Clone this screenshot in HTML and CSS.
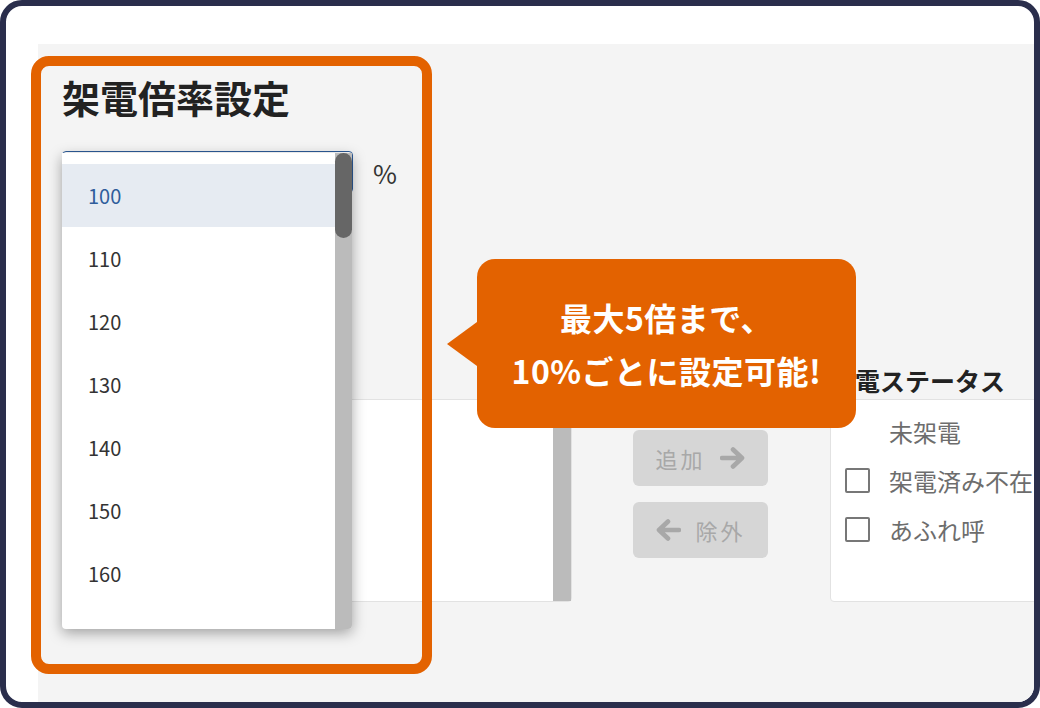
FILE: index.html
```html
<!DOCTYPE html>
<html lang="ja">
<head>
  <meta charset="UTF-8" />
  <title>架電倍率設定</title>
  <link rel="stylesheet" href="styles.css">
</head>
<body>

  <div class="frame">
    <div class="panel">

      <section class="rate">
        <h2 class="rate-title">架電倍率設定</h2>
        <div class="rate-row">
          <div class="select"></div>
          <span class="unit">%</span>
        </div>
      </section>

      <section class="transfer">
        <div class="col col-left">
          <div class="col-label"></div>
          <div class="listbox listbox-left">
            <div class="track"></div>
          </div>
        </div>

        <div class="col col-buttons">
          <button class="move-btn">
            <span class="move-text">追加</span>
            <svg class="arrow" viewBox="0 0 26 22" width="26" height="22">
              <path d="M2 11 H22 M13 2.5 L22 11 L13 19.5" fill="none" stroke="currentColor" stroke-width="4.6" stroke-linecap="round" stroke-linejoin="round"/>
            </svg>
          </button>
          <button class="move-btn">
            <svg class="arrow" viewBox="0 0 26 22" width="26" height="22">
              <path d="M24 11 H4 M13 2.5 L4 11 L13 19.5" fill="none" stroke="currentColor" stroke-width="4.6" stroke-linecap="round" stroke-linejoin="round"/>
            </svg>
            <span class="move-text">除外</span>
          </button>
        </div>

        <div class="col col-right">
          <div class="col-label">架電ステータス</div>
          <div class="listbox listbox-right">
            <div class="status-row"><span class="check check-none"></span>未架電</div>
            <div class="status-row"><span class="check"></span>架電済み不在</div>
            <div class="status-row"><span class="check"></span>あふれ呼</div>
          </div>
        </div>
      </section>

      <div class="highlight"></div>

      <div class="dropdown">
        <ul class="options">
          <li class="option active">100</li>
          <li class="option">110</li>
          <li class="option">120</li>
          <li class="option">130</li>
          <li class="option">140</li>
          <li class="option">150</li>
          <li class="option">160</li>
          <li class="option">170</li>
        </ul>
        <div class="scrollbar"><div class="thumb"></div></div>
      </div>

      <div class="callout">最大5倍まで、<br>10%ごとに設定可能!</div>

    </div>
  </div>

</body>
</html>
```

FILE: styles.css
```css
html, body {
  margin: 0;
  padding: 0;
  background: white;
}

body {
  font-family: "Noto Sans CJK JP", "Noto Sans", sans-serif;
  color: #222;
}

.frame {
  width: 1040px;
  height: 708px;
  box-sizing: border-box;
  border: 6px solid #2a2e4c;
  border-radius: 22px;
  overflow: hidden;
  padding: 38px 0 0 32px;
  background: white;
}

.panel {
  position: relative;
  height: 100%;
  background: #f4f4f4;
}

/* 倍率 */
.rate {
  padding-left: 24px;
}

.rate-title {
  margin: 0;
  padding-top: 26px;
  font-size: 38px;
  line-height: 54px;
  font-weight: bold;
  color: #222;
}

.rate-row {
  display: flex;
  align-items: center;
  margin-top: 27px;
}

.select {
  width: 291px;
  height: 42px;
  box-sizing: border-box;
  border: 1px solid #2d5b98;
  border-radius: 4px;
  background: white;
}

.unit {
  margin-left: 20px;
  font-size: 26px;
  color: #333;
}

/* 転送リスト */
.transfer {
  display: flex;
  align-items: flex-start;
  padding-left: 24px;
  margin-top: 170px;
}

.col {
  flex-shrink: 0;
}

.col-left {
  width: 510px;
}

.col-buttons {
  width: 135px;
  margin-left: 61px;
  padding-top: 67px;
  display: flex;
  flex-direction: column;
  gap: 16px;
}

.col-right {
  width: 300px;
  margin-left: 62px;
}

.col-label {
  height: 34px;
  font-size: 25px;
  font-weight: bold;
  line-height: 34px;
  margin-bottom: 2px;
  color: #222;
  white-space: nowrap;
}

.listbox {
  height: 203px;
  box-sizing: border-box;
  border: 1px solid #e2e2e2;
  border-radius: 4px;
  background: white;
}

.listbox-left {
  display: flex;
  justify-content: flex-end;
}

.track {
  width: 18px;
  height: 100%;
  background: #bbbbbb;
}

.listbox-right {
  padding-top: 7px;
}

.status-row {
  display: flex;
  align-items: center;
  gap: 19px;
  height: 49px;
  padding-left: 14px;
  font-size: 24px;
  color: #6d6d6d;
  white-space: nowrap;
}

.check {
  width: 25px;
  height: 25px;
  box-sizing: border-box;
  border: 2.5px solid #777;
  border-radius: 2px;
  flex-shrink: 0;
}

.check-none {
  visibility: hidden;
}

.move-btn {
  height: 56px;
  border: none;
  border-radius: 6px;
  background: #d6d6d6;
  color: #a8a8a8;
  font-family: inherit;
  font-size: 22px;
  display: flex;
  align-items: center;
  justify-content: center;
  gap: 14px;
  padding: 0;
}

.move-text {
  letter-spacing: 3px;
}

.arrow {
  display: block;
}

/* 注目枠 */
.highlight {
  position: absolute;
  left: -7px;
  top: 12px;
  width: 401px;
  height: 618px;
  box-sizing: border-box;
  border: 10px solid #e36200;
  border-radius: 18px;
  pointer-events: none;
}

/* ドロップダウン */
.dropdown {
  position: absolute;
  left: 24px;
  top: 109px;
  width: 290px;
  height: 476px;
  background: white;
  border-radius: 0 0 4px 4px;
  overflow: hidden;
  box-shadow: 0 4px 14px rgba(0,0,0,0.35);
}

.options {
  list-style: none;
  margin: 0;
  padding: 11px 17px 0 0;
}

.option {
  height: 63px;
  line-height: 63px;
  padding-left: 26px;
  font-size: 20px;
  color: #333;
}

.option.active {
  background: #e6ebf2;
  color: #2f5d9b;
}

.scrollbar {
  position: absolute;
  top: 0;
  right: 0;
  width: 17px;
  height: 100%;
  background: #bbbbbb;
}

.thumb {
  height: 85px;
  border-radius: 9px;
  background: #666;
}

/* 吹き出し */
.callout {
  position: absolute;
  left: 439px;
  top: 215px;
  width: 379px;
  height: 169px;
  background: #e36200;
  border-radius: 18px;
  color: white;
  font-size: 32px;
  font-weight: bold;
  letter-spacing: 0.5px;
  line-height: 53px;
  text-align: center;
  display: flex;
  align-items: center;
  justify-content: center;
}

.callout::before {
  content: "";
  position: absolute;
  left: -30px;
  top: 63px;
  border-right: 30px solid #e36200;
  border-top: 22px solid transparent;
  border-bottom: 22px solid transparent;
}
```
